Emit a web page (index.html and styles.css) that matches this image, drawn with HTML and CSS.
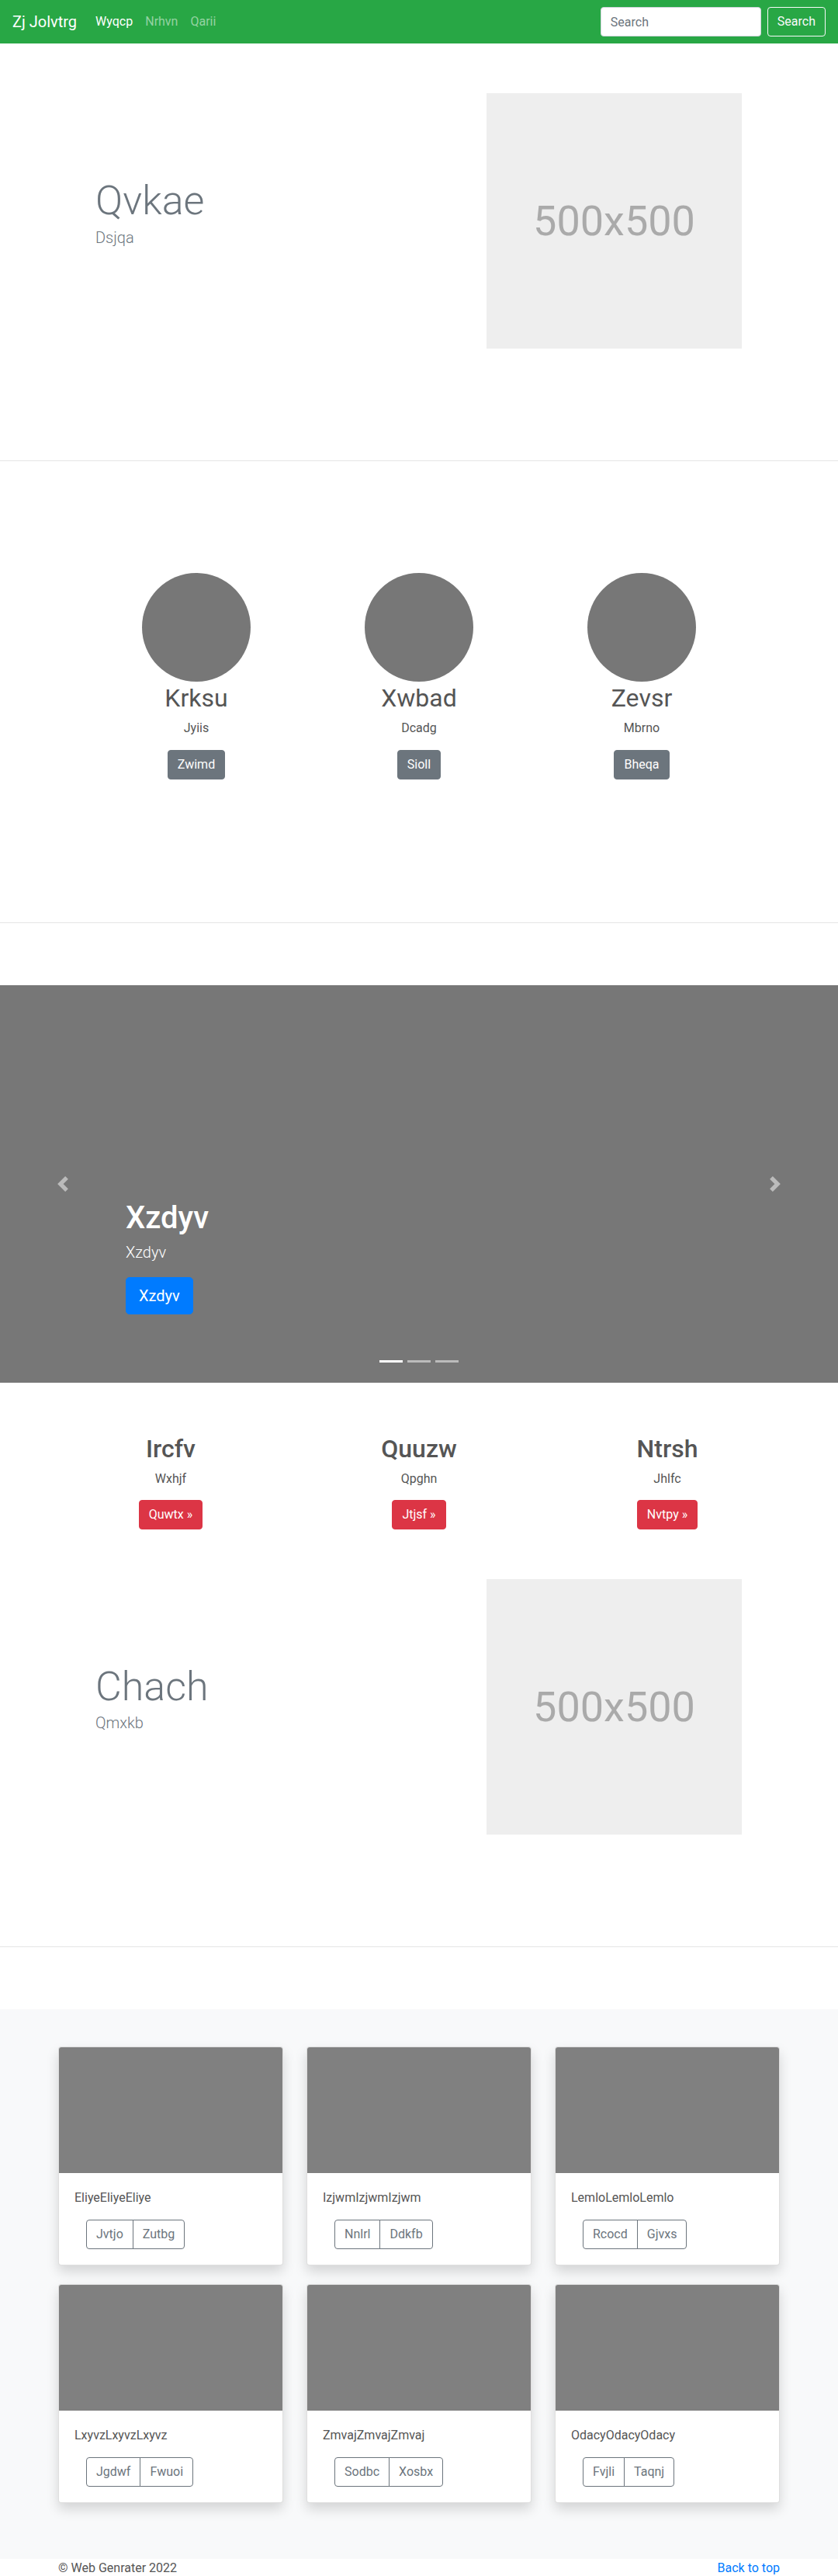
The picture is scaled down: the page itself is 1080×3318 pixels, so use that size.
FILE: index.html
```html
<!DOCTYPE html>
<html lang="en">
<head>
<meta charset="utf-8">
<title>Zj Jolvtrg</title>
<link rel="stylesheet" href="styles.css">
</head>
<body>
<nav class="navbar">
  <a class="brand" href="#">Zj Jolvtrg</a>
  <ul class="nav">
    <li><a class="nav-link active" href="#">Wyqcp</a></li>
    <li><a class="nav-link" href="#">Nrhvn</a></li>
    <li><a class="nav-link" href="#">Qarii</a></li>
  </ul>
  <form class="search">
    <input class="search-input" type="text" placeholder="Search">
    <button class="btn btn-outline-light" type="button">Search</button>
  </form>
</nav>

<section class="hero hero-first">
  <div class="hero-row">
    <div class="hero-text">
      <h1 class="hero-title">Qvkae</h1>
      <p class="hero-lead">Dsjqa</p>
    </div>
    <div class="placeholder">500x500</div>
  </div>
</section>

<hr class="divider">

<section class="marketing">
  <div class="marketing-row">
    <div class="marketing-col">
      <svg class="avatar" width="140" height="140" viewBox="0 0 140 140"><circle cx="70" cy="70" r="70" fill="#777"/></svg>
      <h2>Krksu</h2>
      <p>Jyiis</p>
      <div class="btn-row"><a class="btn btn-secondary" href="#">Zwimd</a></div>
    </div>
    <div class="marketing-col">
      <svg class="avatar" width="140" height="140" viewBox="0 0 140 140"><circle cx="70" cy="70" r="70" fill="#777"/></svg>
      <h2>Xwbad</h2>
      <p>Dcadg</p>
      <div class="btn-row"><a class="btn btn-secondary" href="#">Sioll</a></div>
    </div>
    <div class="marketing-col">
      <svg class="avatar" width="140" height="140" viewBox="0 0 140 140"><circle cx="70" cy="70" r="70" fill="#777"/></svg>
      <h2>Zevsr</h2>
      <p>Mbrno</p>
      <div class="btn-row"><a class="btn btn-secondary" href="#">Bheqa</a></div>
    </div>
  </div>
</section>

<hr class="divider">

<div class="carousel">
  <ol class="indicators">
    <li class="active"></li>
    <li></li>
    <li></li>
  </ol>
  <div class="carousel-caption">
    <h1>Xzdyv</h1>
    <p class="caption-lead">Xzdyv</p>
    <div><a class="btn btn-lg btn-primary" href="#">Xzdyv</a></div>
  </div>
  <a class="control control-prev" href="#">
    <svg width="20" height="20" viewBox="0 0 8 8" fill="#fff"><path d="M5.25 0l-4 4 4 4 1.5-1.5L4.25 4l2.5-2.5L5.25 0z"/></svg>
  </a>
  <a class="control control-next" href="#">
    <svg width="20" height="20" viewBox="0 0 8 8" fill="#fff"><path d="M2.75 0l-1.5 1.5L3.75 4l-2.5 2.5L2.75 8l4-4-4-4z"/></svg>
  </a>
</div>

<section class="features">
  <div class="feature">
    <h2>Ircfv</h2>
    <p>Wxhjf</p>
    <div class="btn-row"><a class="btn btn-danger" href="#">Quwtx &raquo;</a></div>
  </div>
  <div class="feature">
    <h2>Quuzw</h2>
    <p>Qpghn</p>
    <div class="btn-row"><a class="btn btn-danger" href="#">Jtjsf &raquo;</a></div>
  </div>
  <div class="feature">
    <h2>Ntrsh</h2>
    <p>Jhlfc</p>
    <div class="btn-row"><a class="btn btn-danger" href="#">Nvtpy &raquo;</a></div>
  </div>
</section>

<section class="hero">
  <div class="hero-row">
    <div class="hero-text">
      <h1 class="hero-title">Chach</h1>
      <p class="hero-lead">Qmxkb</p>
    </div>
    <div class="placeholder">500x500</div>
  </div>
</section>

<hr class="divider">

<section class="album">
  <div class="album-grid">
    <div class="card">
      <div class="card-img"></div>
      <div class="card-body">
        <p class="card-text">EliyeEliyeEliye</p>
        <div class="btn-group"><a class="btn btn-outline-secondary" href="#">Jvtjo</a><a class="btn btn-outline-secondary" href="#">Zutbg</a></div>
      </div>
    </div>
    <div class="card">
      <div class="card-img"></div>
      <div class="card-body">
        <p class="card-text">IzjwmIzjwmIzjwm</p>
        <div class="btn-group"><a class="btn btn-outline-secondary" href="#">Nnlrl</a><a class="btn btn-outline-secondary" href="#">Ddkfb</a></div>
      </div>
    </div>
    <div class="card">
      <div class="card-img"></div>
      <div class="card-body">
        <p class="card-text">LemloLemloLemlo</p>
        <div class="btn-group"><a class="btn btn-outline-secondary" href="#">Rcocd</a><a class="btn btn-outline-secondary" href="#">Gjvxs</a></div>
      </div>
    </div>
    <div class="card">
      <div class="card-img"></div>
      <div class="card-body">
        <p class="card-text">LxyvzLxyvzLxyvz</p>
        <div class="btn-group"><a class="btn btn-outline-secondary" href="#">Jgdwf</a><a class="btn btn-outline-secondary" href="#">Fwuoi</a></div>
      </div>
    </div>
    <div class="card">
      <div class="card-img"></div>
      <div class="card-body">
        <p class="card-text">ZmvajZmvajZmvaj</p>
        <div class="btn-group"><a class="btn btn-outline-secondary" href="#">Sodbc</a><a class="btn btn-outline-secondary" href="#">Xosbx</a></div>
      </div>
    </div>
    <div class="card">
      <div class="card-img"></div>
      <div class="card-body">
        <p class="card-text">OdacyOdacyOdacy</p>
        <div class="btn-group"><a class="btn btn-outline-secondary" href="#">Fvjli</a><a class="btn btn-outline-secondary" href="#">Taqnj</a></div>
      </div>
    </div>
  </div>
</section>

<footer class="footer">
  <p>&copy; Web Genrater 2022</p>
  <p><a href="#">Back to top</a></p>
</footer>
</body>
</html>
```

FILE: styles.css
```css
* { box-sizing: border-box; }
body {
  margin: 0;
  font-family: Roboto, "Liberation Sans", Arial, sans-serif;
  font-size: 16px;
  line-height: 1.5;
  color: #555;
  background: #fff;
}
h1, h2, p { margin: 0; }
a { text-decoration: none; }

/* navbar */
.navbar {
  display: flex;
  align-items: center;
  height: 56px;
  padding: 8px 16px;
  background: #28a745;
}
.brand {
  font-size: 20px;
  line-height: 30px;
  color: #fff;
  margin-right: 16px;
}
.nav {
  display: flex;
  list-style: none;
  margin: 0;
  padding: 0;
}
.nav-link {
  display: block;
  padding: 8px;
  color: rgba(255, 255, 255, .5);
}
.nav-link.active { color: #fff; }
.search {
  margin: 0 0 0 auto;
  display: flex;
  align-items: center;
}
.search-input {
  width: 207px;
  height: 38px;
  padding: 6px 12px;
  font-family: inherit;
  font-size: 16px;
  color: #495057;
  background: #fff;
  border: 1px solid #ced4da;
  border-radius: 4px;
  margin-right: 8px;
}
.search-input::placeholder { color: #6c757d; }

/* buttons */
.btn {
  display: inline-block;
  font-family: inherit;
  font-size: 16px;
  font-weight: 400;
  line-height: 24px;
  padding: 6px 12px;
  border: 1px solid transparent;
  border-radius: 4px;
  text-align: center;
  white-space: nowrap;
  cursor: pointer;
}
.btn-outline-light { color: #f8f9fa; border-color: #f8f9fa; background: transparent; }
.btn-secondary { color: #fff; background: #6c757d; border-color: #6c757d; }
.btn-danger { color: #fff; background: #dc3545; border-color: #dc3545; }
.btn-primary { color: #fff; background: #007bff; border-color: #007bff; }
.btn-outline-secondary { color: #6c757d; border-color: #6c757d; background: transparent; }
.btn-lg {
  font-size: 20px;
  line-height: 30px;
  padding: 8px 16px;
  border-radius: 4.8px;
}
.btn-row {
  display: flex;
  justify-content: center;
}

/* hero */
.hero { padding: 64px 0; }
.hero-row {
  width: 960px;
  margin: 0 auto;
  padding: 0 64px 0 63px;
  display: flex;
  align-items: center;
}
.hero-text { flex: 1; }
.hero-title {
  font-size: 52px;
  font-weight: 300;
  line-height: 1.2;
  color: #6c757d;
}
.hero-lead {
  font-size: 20px;
  font-weight: 300;
  line-height: 30px;
  color: #6c757d;
  margin-bottom: 20px;
}
.placeholder {
  width: 329px;
  height: 329px;
  background: #eee;
  color: #aaa;
  display: flex;
  align-items: center;
  justify-content: center;
  font-size: 54px;
}

.divider {
  margin: 80px 0;
  border: 0;
  border-top: 1px solid rgba(0, 0, 0, .1);
  height: 0;
}

/* marketing */
.marketing { padding: 64px 0; }
.marketing-row {
  width: 861px;
  margin: 0 auto;
  display: grid;
  grid-template-columns: repeat(3, 1fr);
}
.marketing-col {
  text-align: center;
  margin-bottom: 24px;
}
.avatar { display: block; margin: 0 auto; }
.marketing-col h2 {
  font-size: 32px;
  font-weight: 400;
  line-height: 1.2;
  margin: 2px 0 8px;
}
.marketing-col p { margin-bottom: 16px; }
.marketing-col .btn-row { margin-bottom: 16px; }

/* carousel */
.carousel {
  position: relative;
  height: 512px;
  background: #777;
  margin-bottom: 64px;
  overflow: hidden;
}
.carousel-caption {
  position: absolute;
  left: 162px;
  right: 162px;
  bottom: 88px;
  color: #fff;
}
.carousel-caption h1 {
  font-size: 40px;
  font-weight: 500;
  line-height: 1.2;
  margin-bottom: 5px;
}
.caption-lead {
  font-size: 20px;
  font-weight: 300;
  line-height: 30px;
  margin-bottom: 17px;
}
.control {
  position: absolute;
  top: 0;
  bottom: 0;
  width: 162px;
  display: flex;
  align-items: center;
  justify-content: center;
  opacity: .5;
}
.control-prev { left: 0; }
.control-next { right: 0; }
.indicators {
  position: absolute;
  left: 0;
  right: 0;
  bottom: 26px;
  display: flex;
  justify-content: center;
  gap: 6px;
  list-style: none;
  margin: 0;
  padding: 0;
}
.indicators li {
  width: 30px;
  height: 3px;
  background: #fff;
  opacity: .5;
}
.indicators li.active { opacity: 1; }

/* features */
.features {
  width: 960px;
  margin: 0 auto;
  display: grid;
  grid-template-columns: repeat(3, 1fr);
}
.feature { text-align: center; }
.feature h2 {
  font-size: 32px;
  font-weight: 500;
  line-height: 1.2;
  margin: 2px 0 7px;
}
.feature p { margin-bottom: 15px; }

/* album */
.album {
  background: #f8f9fa;
  padding: 48px 0 72px;
}
.album-grid {
  width: 960px;
  margin: 0 auto;
  padding: 0 15px;
  display: grid;
  grid-template-columns: repeat(3, 290px);
  column-gap: 30px;
  row-gap: 24px;
}
.card {
  background: #fff;
  border: 1px solid rgba(0, 0, 0, .125);
  border-radius: 4px;
  box-shadow: 0 8px 16px rgba(0, 0, 0, .15);
  overflow: hidden;
}
.card-img {
  height: 162px;
  background: #808080;
}
.card-body { padding: 20px; }
.card-text { margin-bottom: 16px; }
.btn-group {
  display: inline-flex;
  margin-left: 15px;
}
.btn-group .btn + .btn {
  margin-left: -1px;
  border-top-left-radius: 0;
  border-bottom-left-radius: 0;
}
.btn-group .btn:not(:last-child) {
  border-top-right-radius: 0;
  border-bottom-right-radius: 0;
}

/* footer */
.footer {
  width: 960px;
  margin: 0 auto;
  padding: 0 15px;
  display: flex;
  justify-content: space-between;
}
.footer p { margin-bottom: 16px; }
.footer a { color: #007bff; }
```
